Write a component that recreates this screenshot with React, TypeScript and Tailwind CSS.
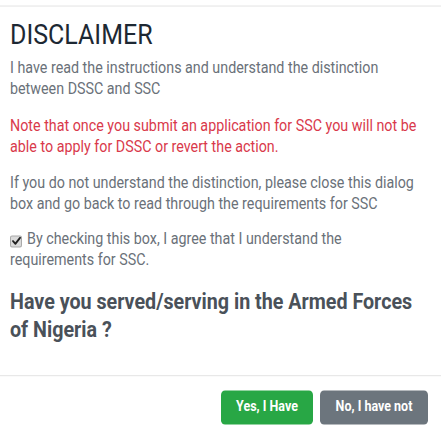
export default function App() {
  return (
    <div className="w-[441px] h-[431px] bg-white overflow-hidden">
      <div
        className="w-[441px] h-[392px] origin-top-left scale-y-[1.1]"
        style={{ fontFamily: "Roboto, 'Liberation Sans', sans-serif" }}
      >
        <div className="h-[4.5px]" />
        <div className="border-t border-[#e6e6e6] pl-[10px] pr-[15px] pt-[11.5px] h-[336.5px]">
          <h1 className="text-[25px] leading-[30px] font-normal text-[#1d2833] mb-[5px]">DISCLAIMER</h1>
          <p className="text-[14.3px] leading-[19.1px] text-[#6a7179] mb-[14.5px]">
            I have read the instructions and understand the distinction between DSSC and SSC
          </p>
          <p className="text-[14.3px] leading-[19.1px] text-[#d9394b] mb-[14.5px]">
            Note that once you submit an application for SSC you will not be able to apply for DSSC or revert the action.
          </p>
          <p className="text-[14.3px] leading-[19.1px] text-[#6a7179] mb-[12.7px]">
            If you do not understand the distinction, please close this dialog box and go back to read through the requirements for SSC
          </p>
          <p className="text-[14.3px] leading-[19.1px] text-[#6a7179] mb-[15.5px]">
            <span className="inline-flex items-center justify-center w-[12px] h-[11px] rounded-[2px] bg-[#dadada] border border-[#a9a9a9] align-[-1px] mr-[5px]">
              <svg width="9" height="8" viewBox="0 0 9 8" fill="none">
                <path d="M1 4.2 L3.4 6.6 L8 1.2" stroke="#1f1f1f" strokeWidth="1.8" strokeLinecap="round" strokeLinejoin="round" />
              </svg>
            </span>
            By checking this box, I agree that I understand the requirements for SSC.
          </p>
          <h2 className="text-[19.7px] leading-[25.5px] font-bold text-[#4a5159]">
            Have you served/serving in the Armed Forces of Nigeria ?
          </h2>
        </div>
        <div className="border-t border-[#e6e6e6] flex justify-end gap-[7px] pr-[13px] pt-[12.5px]">
          <button className="h-[31px] w-[92px] rounded-[4px] bg-[#28a745] text-white text-[12.5px] font-bold">
            Yes, I Have
          </button>
          <button className="h-[31px] w-[108px] rounded-[4px] bg-[#6c757d] text-white text-[12.5px] font-bold">
            No, I have not
          </button>
        </div>
      </div>
    </div>
  );
}
